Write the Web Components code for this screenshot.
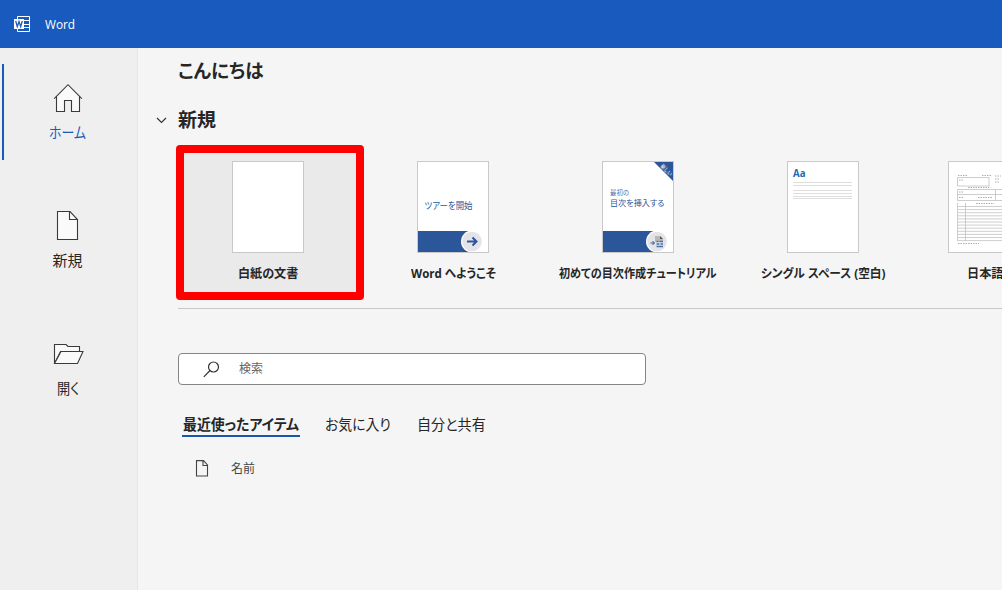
<!DOCTYPE html>
<html lang="ja">
<head>
<meta charset="utf-8">
<title>Word</title>
<style>
html,body{margin:0;height:100%;overflow:hidden}
body{font-family:"Open Sans","Noto Sans CJK JP",sans-serif;color:#262626;background:#f5f5f5}
</style>
</head>
<body>
<word-start></word-start>
<script>
const define=(name,html,setup)=>customElements.define(name,class extends HTMLElement{
  constructor(){super();this.attachShadow({mode:'open'});}
  connectedCallback(){this.shadowRoot.innerHTML=typeof html==='function'?html(this):html;if(setup)setup(this);}
});

/* A single line of text condensed to a given width, like the UI's narrow kana. */
define('fit-text',e=>`<style>
:host{display:block;width:${e.getAttribute('w')}px;height:20px;line-height:20px;white-space:nowrap;flex:none}
span{display:inline-block;transform-origin:0 50%;font-feature-settings:"palt"}
</style><span>${e.getAttribute('text')}</span>`,e=>{
  const s=e.shadowRoot.querySelector('span');
  s.style.transform=`scaleX(${(+e.getAttribute('w')/s.offsetWidth).toFixed(4)})`;
});

define('app-bar',`<style>
:host{display:flex;align-items:center;height:48px;background:#185abd;color:#fff;padding-left:14px;gap:15px;box-sizing:border-box}
svg{display:block}fit-text{font-size:13px}
</style>
<svg width="16" height="16" viewBox="0 0 16 16"><path d="M3.500 3V.5h12v15h-12V13M9 4.500h6.500M9 8.500h6.500M9 11.500h6.500" fill="none" stroke="#fff"/><rect y="3" width="10" height="10" fill="#fff"/><path d="M1.700 5 3.300 10.600 5 5.600 6.700 10.600 8.300 5" fill="none" stroke="#185abd" stroke-width="1.300"/></svg>
<fit-text w="30" text="Word"></fit-text>`);

const navIcons={
home:'<path d="M3.500 14.500V28.500H11.500V17.500H18.500V28.500H26.500V14.500L15 2Z" fill="#fafafa" stroke="none"/><path d="M1.200 15.600 15 1.700 28.800 15.600M3.500 13.600V28.500H11.500V17.500H18.500V28.500H26.500V13.600"/>',
doc:'<path d="M4.500 .5H17L24.500 8.500V28.500H4.500Z" fill="#fafafa"/><path d="M16.500 .5V8.500H24.500"/>',
open:'<path d="M1.500 24.500V5.500H13L15 7.500H26.500V12.500H7.500Z" fill="#fafafa"/><path d="M1.500 24.500 8 12.500H30L24.500 24.500Z" fill="#fafafa"/>'};
define('nav-item',e=>`<style>
:host{display:flex;flex-direction:column;align-items:center;height:96px;box-sizing:border-box;padding:19px 6px 0 0;border-left:2px solid transparent;margin-left:2px;font-size:15px}
:host([active]){border-color:#185abd}
:host([active]) fit-text{color:#185abd}
svg{display:block;overflow:visible;margin-bottom:10px}
</style><svg width="30" height="29" viewBox="0 0 30 29" fill="none" stroke="#3a3a3a" stroke-width="1.100">${navIcons[e.getAttribute('icon')]}</svg>
<fit-text w="${e.getAttribute('w')}" text="${e.getAttribute('label')}"></fit-text>`);

define('side-nav',`<style>
:host{display:flex;flex-direction:column;gap:32px;width:138px;box-sizing:border-box;padding-top:16px;background:#efefef;border-right:1px solid #e6e6e6;flex:none}
</style>
<nav-item active icon="home" w="37" label="ホーム"></nav-item>
<nav-item icon="doc" w="30" label="新規"></nav-item>
<nav-item icon="open" w="22" label="開く"></nav-item>`);

/* Document preview art, drawn on a 70x90 sheet. */
const band='<rect y="69" width="70" height="21" fill="#2b579a"/><path d="M54 69h16v21H54Z" fill="#fff"/><circle cx="54" cy="79.500" r="11" fill="#fff"/><circle cx="54" cy="79.500" r="9.800" fill="#e4e4e8"/>';
let rows='';
for(let y=44.5;y<79;y+=3.1)rows+=`<path d="M9 ${y.toFixed(1)}H109" stroke="#c2c2c2" stroke-width=".8"/>`;
const art={
blank:'',
tour:band+'<path d="M49 79.500h9M54.500 75.500l4 4-4 4" fill="none" stroke="#2b579a" stroke-width="2"/><text x="6.500" y="47" font-size="9.500" fill="#2b579a" textLength="48" lengthAdjust="spacingAndGlyphs">ツアーを開始</text>',
toc:band+`<path d="M51 0h19v19Z" fill="#2b579a"/><text transform="translate(57 4.500) rotate(45)" font-size="5.500" fill="#fff" textLength="14" lengthAdjust="spacingAndGlyphs">新しい</text>
<text x="7" y="33" font-size="6.500" fill="#4b70aa" textLength="19" lengthAdjust="spacingAndGlyphs">最初の</text><text x="7" y="43.500" font-size="8.500" fill="#2b579a" textLength="54.500" lengthAdjust="spacingAndGlyphs">目次を挿入する</text>
<path d="M52 80V74h5l3 3v3Z" fill="#b8b8b8"/><path d="M57 74v3h3Z" fill="#555"/><path d="M47.500 81h4M49.500 79l2 2-2 2" fill="none" stroke="#2b579a" stroke-width="1"/><path d="M53.500 79.500h2M56.500 79.500h3.500M53.500 82h3M57.500 82h2.500M53.500 84.500h6.500" stroke="#4a70ab" stroke-width="1.300"/>`,
single:'<text x="5" y="15" font-size="10" font-weight="700" fill="#1f6bb0" textLength="12.500" lengthAdjust="spacingAndGlyphs">Aa</text><path d="M5 20.500H64M5 23.500H64M5 28.500H64M5 31.500H64M5 34.500H64M5 36.500H64" stroke="#dedede"/>',
form:`<g fill="none" stroke="#c0c0c0" stroke-width=".8"><path d="M8.500 15.500h31.500v8.500h-31.500zM8.500 27.500H109M8.500 32.500H109M8.500 38.500H109M8.500 27.500V38.500M46.500 27.500V38.500M8.500 41V79M16.500 41V79"/><path d="M9 13.500h9M33 13.500h10M46 14h6M46 17h5M46 20h4M19 25.500h22M10 18h5M10 30h4M10 35.500h5M29 35.500h15M27 41.500h18M9 81.500h21" stroke="#999" stroke-dasharray="1.500 1"/></g>${rows}`};
define('template-card',e=>{const w=+e.getAttribute('sheet')||70;return `<style>
:host{display:flex;flex-direction:column;align-items:center;width:172px;height:139px;box-sizing:border-box;padding:8px 4px 0 0;flex:none;font-size:12.500px;font-weight:700}
:host([selected]){background:#eaeaea;border:8px solid #f00;border-radius:4px;width:188px;height:155px;margin:-8px}
svg{display:block;border:1px solid #c9c9c9;background:#fff;margin-bottom:11px;font-weight:400;flex:none;font-feature-settings:"palt"}
fit-text{align-self:${e.hasAttribute('start')?'flex-start':'center'};margin-left:${e.getAttribute('start')||0}px}
</style><svg width="${w}" height="90" viewBox="0 0 ${w} 90">${art[e.getAttribute('art')]}</svg>
<fit-text w="${e.getAttribute('w')}" text="${e.getAttribute('label')}"></fit-text>`});

define('template-row',`<style>
:host{display:flex;gap:13px;height:166px;box-sizing:border-box;padding:10px 0 0 6px;border-bottom:1px solid #c8c8c8}
</style>
<template-card selected art="blank" w="60" label="白紙の文書"></template-card>
<template-card art="tour" w="85" label="Word へようこそ"></template-card>
<template-card art="toc" w="158" label="初めての目次作成チュートリアル"></template-card>
<template-card art="single" w="124" label="シングル スペース (空白)"></template-card>
<template-card art="form" sheet="118" start="43" w="37" label="日本語"></template-card>`);

define('search-box',`<style>
:host{display:flex;align-items:center;width:468px;height:32px;box-sizing:border-box;border:1px solid #858585;border-radius:4px;background:#fff;padding-left:24px;gap:19px;color:#666;font-size:12.500px}
</style><svg width="17" height="17" viewBox="0 0 17 17" fill="none" stroke="#333" stroke-width="1.200"><circle cx="10.500" cy="6" r="5"/><path d="M7 9.500.8 15.800"/></svg>
<fit-text w="24" text="検索"></fit-text>`);

define('tab-item',e=>`<style>
:host{display:block;height:20px;border-bottom:2px solid transparent;font-size:14.500px;padding:0 1px}
:host([active]){font-weight:700;border-color:#1a57a8}
</style><fit-text w="${e.getAttribute('w')}" text="${e.getAttribute('label')}"></fit-text>`);

define('start-main',`<style>
:host{display:flex;flex-direction:column;flex:1;min-width:0;padding:13px 0 0 40px;overflow:hidden}
fit-text{font-weight:700;font-size:19px}
.sec{display:flex;align-items:center;gap:11px;margin:29px 0 0 -22px}
svg{display:block}
template-row{margin-top:13px;width:824px}
search-box{margin-top:44px}
.tabs{display:flex;gap:24px;margin:30px 0 0 4px}
.list{display:flex;align-items:flex-end;margin:22px 0 0 17px;gap:22px}
.list svg{margin-bottom:2px}
.list fit-text{font-size:12.500px;font-weight:400;color:#444}
</style>
<fit-text w="86" text="こんにちは"></fit-text>
<div class="sec"><svg width="11" height="7" viewBox="0 0 11 7"><path d="M1 1l4.500 4.500L10 1" fill="none" stroke="#333" stroke-width="1.200"/></svg><fit-text w="38" text="新規"></fit-text></div>
<template-row></template-row>
<search-box></search-box>
<div class="tabs"><tab-item active w="116" label="最近使ったアイテム"></tab-item><tab-item w="66" label="お気に入り"></tab-item><tab-item w="69" label="自分と共有"></tab-item></div>
<div class="list"><svg width="14" height="17" viewBox="0 0 14 17" fill="none" stroke="#444" stroke-width="1.100"><path d="M1.500 .6H8.500L12.500 5V16H1.500ZM8 .6V5.500H12.500"/></svg><fit-text w="24" text="名前"></fit-text></div>`);

define('word-start',`<style>
:host{display:flex;flex-direction:column;height:590px;width:1002px;overflow:hidden;background:#f5f5f5}
.body{display:flex;flex:1;min-height:0}
</style><app-bar></app-bar><div class="body"><side-nav></side-nav><start-main></start-main></div>`);
</script>
</body>
</html>
